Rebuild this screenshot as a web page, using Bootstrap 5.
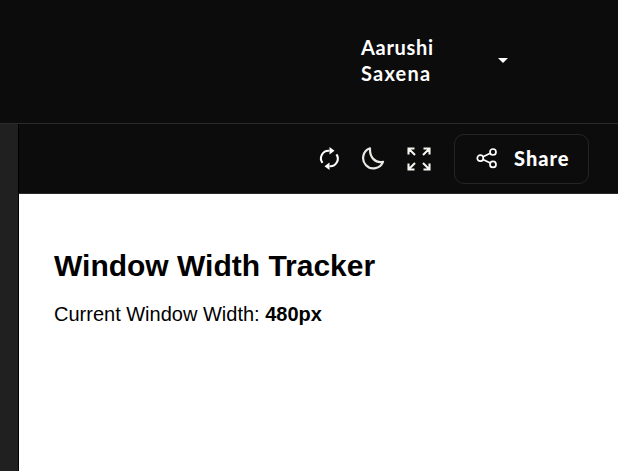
<!DOCTYPE html>
<html lang="en">
<head>
<meta charset="utf-8">
<meta name="viewport" content="width=device-width, initial-scale=1">
<title>Window Width Tracker</title>
<link href="https://cdn.jsdelivr.net/npm/bootstrap@5.3.0/dist/css/bootstrap.min.css" rel="stylesheet">
<style>
body { background: #0c0c0c; font-family: Lato, sans-serif; }
.topbar { height: 124px; border-bottom: 1px solid #2a2a2a; padding: 0 110px 2px 361px; }
.user-name { font-size: 20px; line-height: 26px; letter-spacing: .7px; font-weight: 700; width: 90px; margin-top: -2px; }
.user-name span { letter-spacing: 1.200px; }
.caret { width: 10px; height: 5px; }
.gutter { width: 19px; background: #202020; border-right: 1px solid #000; }
.toolbar { height: 70px; border-bottom: 1px solid #2a2a2a; padding: 0 29px 0 0; }
.tool { width: 24px; height: 24px; }
.tool-refresh { margin-right: 20px; }
.tool-moon { margin-right: 22px; }
.share-btn { width: 135px; height: 50px; border: 1px solid #252525; border-radius: 10px; margin-left: 23px; padding: 0 0 1px 21px; gap: 16px; font-size: 20px; font-weight: 900; letter-spacing: 1px; }
.preview { padding: 53px 35px; font-family: "Liberation Sans", Arial, sans-serif; color: #000; }
.preview h1 { font-size: 30px; line-height: 37px; }
.preview p { font-size: 20px; line-height: 24px; padding-top: 2px; }
svg { flex: none; display: block; }
</style>
</head>
<body class="vh-100 d-flex flex-column overflow-hidden">
<header class="topbar d-flex align-items-center justify-content-between flex-shrink-0 text-white">
  <div class="user-name">Aarushi<br><span>Saxena</span></div>
  <svg class="caret" viewBox="0 0 10 5" fill="#fff"><path d="M0 0h10L5 5z"/></svg>
</header>
<main class="d-flex flex-grow-1">
  <aside class="gutter flex-shrink-0"></aside>
  <section class="flex-grow-1 d-flex flex-column">
    <div class="toolbar d-flex align-items-center justify-content-end text-white flex-shrink-0">
      <svg class="tool tool-refresh" viewBox="0 0 24 24" fill="none" stroke="#fff" stroke-width="2.100"><path d="M5.500 15.900A7.600 7.600 0 0 1 12.500 3.800M19.500 7.400A7.600 7.600 0 0 1 12.500 19.200"/><path d="M12.500 0 17.500 3.800 12.500 7.500zM12.500 15.500 7.500 19.200 12.500 23z" fill="#fff" stroke="none"/></svg>
      <svg class="tool tool-moon" viewBox="0 0 24 24" fill="none" stroke="#e8e8e4" stroke-width="2.200" stroke-linejoin="round"><path d="M9 1.300A10.300 10.300 0 1 0 22 14.800C14.500 16.500 8.500 10.500 9 1.300z"/></svg>
      <svg class="tool" viewBox="0 0 24 24" fill="none" stroke="#f5f5f0" stroke-width="2.100"><path d="M1.500 7.500v-6h6M16.500 1.500h6v6M22.500 16.500v6h-6M7.500 22.500h-6v-6M1.500 1.500l6.500 6.500M22.500 1.500L16 8M22.500 22.500L16 16M1.500 22.500L8 16"/></svg>
      <button type="button" class="share-btn btn text-white d-flex align-items-center">
        <svg width="22" height="22" viewBox="0 0 22 22" fill="none" stroke="#fff" stroke-width="1.700"><circle cx="4.300" cy="11.200" r="3"/><circle cx="17" cy="5" r="3"/><circle cx="17" cy="17.400" r="3"/><path d="m7 9.800 7.300-3.500M7 12.600l7.300 3.500"/></svg>
        <span>Share</span>
      </button>
    </div>
    <div class="preview bg-white flex-grow-1">
      <h1 class="fw-bold mb-0">Window Width Tracker</h1>
      <p class="mb-0 mt-3">Current Window Width: <strong>480px</strong></p>
    </div>
  </section>
</main>
<script src="https://cdn.jsdelivr.net/npm/bootstrap@5.3.0/dist/js/bootstrap.bundle.min.js"></script>
</body>
</html>
